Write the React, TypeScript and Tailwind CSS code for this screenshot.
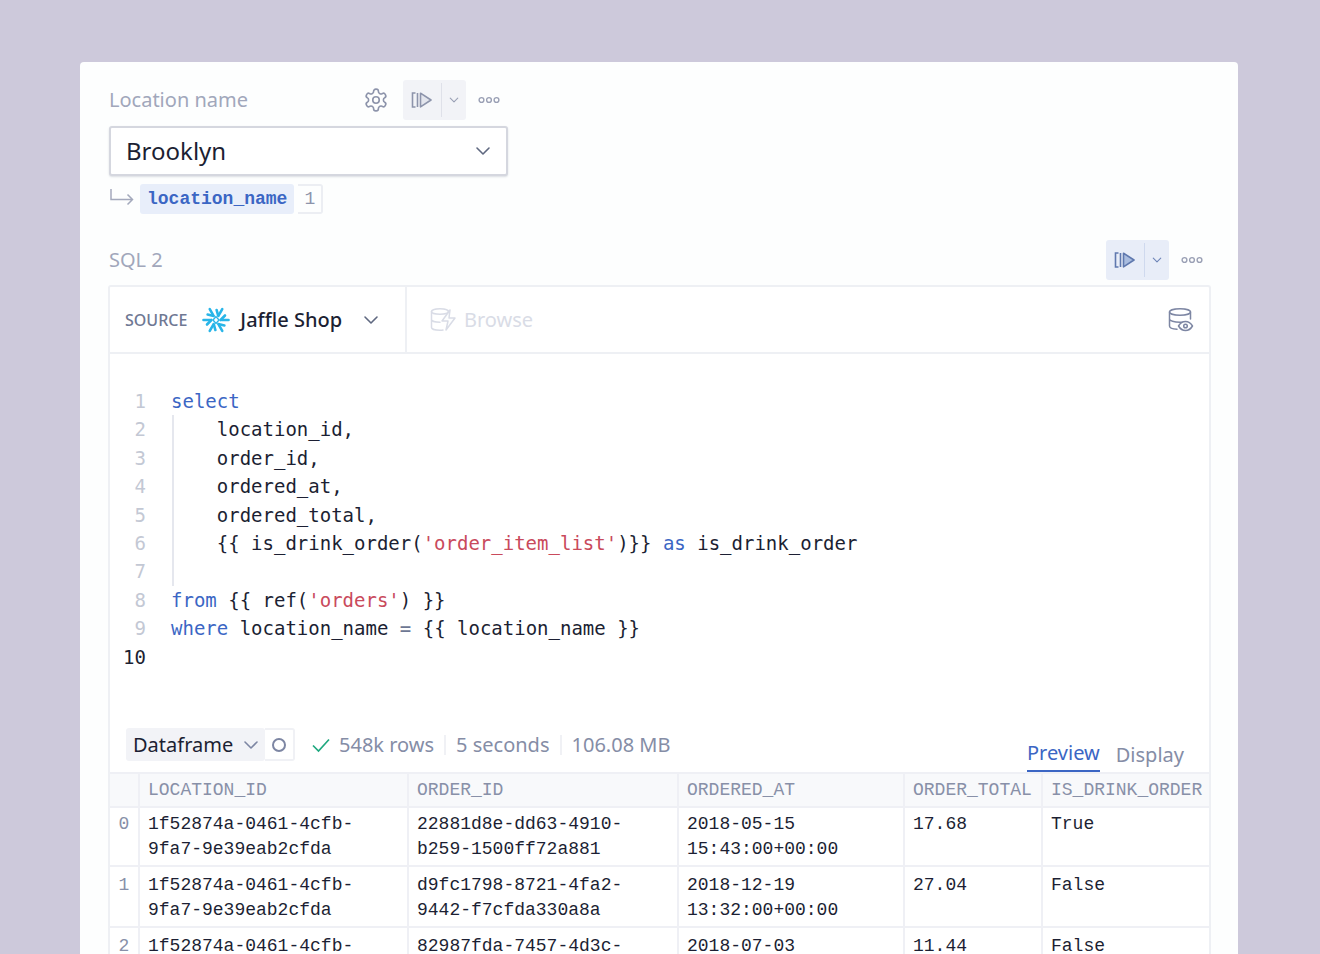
import React from "react";

const UI = "font-['Noto_Sans','Inter',sans-serif]";
const MONO = "font-['Liberation_Mono',monospace]";
const CODE = "font-['DejaVu_Sans_Mono',monospace]";

function Chevron({ className = "", w = 16, sw = 1.6 }: { className?: string; w?: number; sw?: number }) {
  return (
    <svg width={w} height={w} viewBox="0 0 16 16" fill="none" className={className}>
      <path d="M2 5l6 6 6-6" stroke="currentColor" strokeWidth={sw} strokeLinecap="round" strokeLinejoin="round" />
    </svg>
  );
}

function RunIcon({ color, fill }: { color: string; fill: string }) {
  return (
    <svg width="22" height="18" viewBox="0 0 22 18" fill="none">
      <path d="M4.5 2H1.5v14h3" stroke={color} strokeWidth="1.6" />
      <path d="M6.5 2v14" stroke={color} strokeWidth="1.6" />
      <path d="M9.5 2.2L20 9 9.5 15.8z" fill={fill} stroke={color} strokeWidth="1.6" strokeLinejoin="round" />
    </svg>
  );
}

function Dots({ color }: { color: string }) {
  return (
    <svg width="22" height="8" viewBox="0 0 22 8" fill="none" stroke={color} strokeWidth="1.4">
      <circle cx="3.5" cy="4" r="2.4" />
      <circle cx="11" cy="4" r="2.4" />
      <circle cx="18.5" cy="4" r="2.4" />
    </svg>
  );
}

function Gear() {
  return (
    <svg width="26" height="26" viewBox="0 0 24 24" fill="none" stroke="#8d94ab" strokeWidth="1.5" strokeLinecap="round" strokeLinejoin="round">
      <path d="M12.22 2h-.44a2 2 0 0 0-2 2v.18a2 2 0 0 1-1 1.73l-.43.25a2 2 0 0 1-2 0l-.15-.08a2 2 0 0 0-2.73.73l-.22.38a2 2 0 0 0 .73 2.73l.15.1a2 2 0 0 1 1 1.72v.51a2 2 0 0 1-1 1.74l-.15.09a2 2 0 0 0-.73 2.73l.22.38a2 2 0 0 0 2.73.73l.15-.08a2 2 0 0 1 2 0l.43.25a2 2 0 0 1 1 1.73V20a2 2 0 0 0 2 2h.44a2 2 0 0 0 2-2v-.18a2 2 0 0 1 1-1.73l.43-.25a2 2 0 0 1 2 0l.15.08a2 2 0 0 0 2.73-.73l.22-.39a2 2 0 0 0-.73-2.73l-.15-.08a2 2 0 0 1-1-1.74v-.5a2 2 0 0 1 1-1.74l.15-.09a2 2 0 0 0 .73-2.73l-.22-.38a2 2 0 0 0-2.73-.73l-.15.08a2 2 0 0 1-2 0l-.43-.25a2 2 0 0 1-1-1.73V4a2 2 0 0 0-2-2z" />
      <circle cx="12" cy="12" r="3" />
    </svg>
  );
}

function Snowflake() {
  const arm = (
    <>
      <path d="M14 1.8v7" stroke="#29b5e8" strokeWidth="2.8" strokeLinecap="round" />
      <path d="M9.4 3.6L14 8.4l4.6-4.8" stroke="#29b5e8" strokeWidth="2.8" strokeLinecap="round" fill="none" />
    </>
  );
  return (
    <svg width="28" height="28" viewBox="0 0 28 28" fill="none">
      {[30, 90, 150, 210, 270, 330].map((a) => (
        <g key={a} transform={`rotate(${a} 14 14)`}>
          <path d="M14 1.5v6.6" stroke="#29b5e8" strokeWidth="2.6" strokeLinecap="round" />
          <path d="M9.5 5L14 9.4" stroke="#29b5e8" strokeWidth="2.6" strokeLinecap="round" />
        </g>
      ))}
      <path d="M14 10.6l3 3.4-3 3.4-3-3.4z" fill="none" stroke="#29b5e8" strokeWidth="1.4" />
      {false && arm}
    </svg>
  );
}

function BrowseIcon() {
  return (
    <svg width="28" height="26" viewBox="0 0 28 26" fill="none" stroke="#d9dce6" strokeWidth="1.5" strokeLinecap="round" strokeLinejoin="round">
      <ellipse cx="10" cy="4.5" rx="8.5" ry="2.8" />
      <path d="M1.5 4.5v16c0 1.5 3.8 2.8 8.5 2.8 1 0 2 0 3-.2M1.5 12.5c0 1.5 3.8 2.8 8.5 2.8M18.5 4.5v3" />
      <path d="M20 3L12 14h6l-2 9 9-12h-6l1-8z" fill="#fdfefe" />
    </svg>
  );
}

function DbEye() {
  return (
    <svg width="26" height="26" viewBox="0 0 26 26" fill="none" stroke="#7d86a3" strokeWidth="1.5" strokeLinecap="round" strokeLinejoin="round">
      <ellipse cx="12" cy="5" rx="10.5" ry="3.2" />
      <path d="M1.5 5v14c0 1.6 3.2 3 7.5 3.2M1.5 12c0 1.7 4.5 3.2 10.5 3.2 1.5 0 3-.1 4.3-.3M22.5 5v7" />
      <path d="M10.5 19c1.8-3 4.2-4.5 7-4.5s5.2 1.500 7 4.500c-1.800 3-4.200 4.500-7 4.500s-5.200-1.500-7-4.500z" fill="#fdfefe" />
      <circle cx="17.500" cy="19" r="1.800" />
    </svg>
  );
}

const B = ({ children }: { children: React.ReactNode }) => <span className="text-[#3b66c4]">{children}</span>;
const R = ({ children }: { children: React.ReactNode }) => <span className="text-[#c94a5c]">{children}</span>;

const code: React.ReactNode[] = [
  <B>select</B>,
  <>{"    "}location_id,</>,
  <>{"    "}order_id,</>,
  <>{"    "}ordered_at,</>,
  <>{"    "}ordered_total,</>,
  <>{"    {{ is_drink_order("}<R>'order_item_list'</R>{")}} "}<B>as</B>{" is_drink_order"}</>,
  <></>,
  <><B>from</B>{" {{ ref("}<R>'orders'</R>{") }}"}</>,
  <><B>where</B>{" location_name "}<span className="text-[#6d7794]">=</span>{" {{ location_name }}"}</>,
  <></>,
];

const cols = "grid grid-cols-[28px_269px_270px_226px_138px_1fr]";
const cellB = "border-l-2 border-[#eff0f5] pl-[8px]";

const rows = [
  { i: "0", h: "h-[59px]", pt: "pt-[4px]", c: ["1f52874a-0461-4cfb-\n9fa7-9e39eab2cfda", "22881d8e-dd63-4910-\nb259-1500ff72a881", "2018-05-15\n15:43:00+00:00", "17.68", "True"] },
  { i: "1", h: "h-[61px]", pt: "pt-[6px]", c: ["1f52874a-0461-4cfb-\n9fa7-9e39eab2cfda", "d9fc1798-8721-4fa2-\n9442-f7cfda330a8a", "2018-12-19\n13:32:00+00:00", "27.04", "False"] },
  { i: "2", h: "h-[61px]", pt: "pt-[6px]", c: ["1f52874a-0461-4cfb-", "82987fda-7457-4d3c-", "2018-07-03", "11.44", "False"] },
];

export default function App() {
  return (
    <div className={`h-[954px] overflow-hidden bg-[#cdc9db] pl-[80px] pt-[62px] ${UI}`}>
      <div className="h-[892px] w-[1158px] overflow-hidden rounded-t-[4px] bg-[#fdfefe] pl-[28px] pr-[27px] pt-[18px]">
        {/* Input cell header */}
        <div className="flex h-[40px] w-[400px] items-center">
          <span className="ml-[1px] text-[20px] text-[#a1a7bb]">Location name</span>
          <span className="ml-auto flex items-center">
            <Gear />
            <span className="ml-[14px] flex h-[40px] w-[63px] items-center rounded-[3px] bg-[#f2f3f7]">
              <span className="flex w-[38px] justify-center"><RunIcon color="#8d94ab" fill="#e3e5ed" /></span>
              <span className="h-[34px] w-px bg-[#dfe1e9]" />
              <span className="flex flex-1 justify-center text-[#9aa0b5]"><Chevron w={10} sw={1.8} /></span>
            </span>
            <span className="ml-[12px] mr-[8px]"><Dots color="#9aa0b5" /></span>
          </span>
        </div>
        {/* Select */}
        <div className="mt-[6px] ml-[1px] flex h-[50px] w-[399px] items-center justify-between rounded-[3px] border-2 border-[#d5d7df] bg-white pl-[15px] pr-[15px] shadow-[0_1px_2px_rgba(60,70,100,0.18)]">
          <span className="text-[24px] text-[#1c1f33]">Brooklyn</span>
          <Chevron className="text-[#5f6880]" />
        </div>
        {/* Variable row */}
        <div className="mt-[8px] ml-[1px] flex h-[30px] items-center">
          <svg width="26" height="18" viewBox="0 0 26 18" fill="none" stroke="#a4a9bc" strokeWidth="1.5" className="mb-[4px] mr-[5px]">
            <path d="M2 1v10.500h21M18.500 6.500l5 5-5 5" />
          </svg>
          <span className={`flex h-[30px] items-center rounded-[3px] bg-[#e8eefa] px-[7px] text-[18px] font-bold text-[#3b66c4] ${MONO}`}>location_name</span>
          <span className={`ml-[4px] flex h-[30px] w-[25px] items-center justify-center rounded-r-[3px] border-2 border-l-0 border-[#eceef3] text-[18px] text-[#8d94ab] ${MONO}`}>1</span>
        </div>
        {/* SQL header */}
        <div className="mt-[26px] flex h-[40px] items-center">
          <span className="ml-[1px] text-[20px] text-[#a1a7bb]">SQL 2</span>
          <span className="ml-auto flex items-center">
            <span className="flex h-[40px] w-[63px] items-center rounded-[3px] bg-[#e8edf8]">
              <span className="flex w-[38px] justify-center"><RunIcon color="#5f78ae" fill="#a9bcdf" /></span>
              <span className="h-[34px] w-px bg-[#cfd9ee]" />
              <span className="flex flex-1 justify-center text-[#6f86b8]"><Chevron w={10} sw={1.8} /></span>
            </span>
            <span className="ml-[12px] mr-[8px]"><Dots color="#9aa0b5" /></span>
          </span>
        </div>
        {/* Panel */}
        <div className="mt-[5px] h-[700px] w-[1103px] rounded-t-[3px] border-2 border-b-0 border-[#eef0f4] bg-white">
          <div className="flex h-[67px] items-center border-b-2 border-[#eef0f4]">
            <div className="flex h-full w-[297px] items-center border-r-2 border-[#eef0f4] pl-[15px]">
              <span className="text-[16px] font-medium text-[#6f7893]">SOURCE</span>
              <span className="ml-[15px]"><Snowflake /></span>
              <span className="ml-[10px] text-[20px] font-medium text-[#1c1f33]">Jaffle Shop</span>
              <Chevron className="ml-[21px] text-[#5f6880]" />
            </div>
            <span className="ml-[23px]"><BrowseIcon /></span>
            <span className="ml-[6px] text-[20px] text-[#d9dce6]">Browse</span>
            <span className="ml-auto mr-[15px]"><DbEye /></span>
          </div>
          {/* Code */}
          <div className={`relative flex h-[374px] pt-[33px] text-[19px] leading-[28.4px] ${CODE}`}>
            <div className="w-[36px] text-right text-[#c3c8d4]">
              {code.map((_, i) => (
                <div key={i} className={i === 9 ? "text-[#1c1f33]" : ""}>{i + 1}</div>
              ))}
            </div>
            <div className="ml-[25px] whitespace-pre text-[#1c1f33]">
              {code.map((l, i) => (
                <div key={i} className="h-[28.4px]">{l}</div>
              ))}
            </div>
            <div className="absolute left-[62px] top-[61px] h-[171px] w-[2px] bg-[#e5e7ee]" />
          </div>
          {/* Result bar */}
          <div className="flex h-[44px] items-start pl-[16px] pr-[25px]">
            <span className="flex h-[33px] w-[139px] items-center rounded-[3px] bg-[#f2f3f7] pl-[7px] text-[20px] text-[#1c1f33]">
              Dataframe
              <Chevron className="ml-[10px] text-[#7d86a3]" />
            </span>
            <span className="flex h-[33px] w-[30px] items-center justify-center rounded-r-[3px] border-2 border-l-0 border-[#f0f1f5]">
              <span className="h-[14px] w-[14px] rounded-full border-2 border-[#7d86a3]" />
            </span>
            <span className="flex h-[33px] items-center text-[20px] text-[#858da6]">
              <svg width="20" height="16" viewBox="0 0 20 16" fill="none" className="ml-[16px] mr-[8px]">
                <path d="M2 8.500l5.500 5.500L18 2.500" stroke="#1fa87f" strokeWidth="1.700" />
              </svg>
              548k rows
              <span className="mx-[10px] h-[20px] w-[2px] bg-[#f0f1f5]" />
              5 seconds
              <span className="mx-[10px] h-[20px] w-[2px] bg-[#f0f1f5]" />
              106.08 MB
            </span>
            <span className="ml-auto flex h-[44px] items-end gap-[16px] text-[20px]">
              <span className="flex h-[44px] items-end border-b-2 border-[#3b66c4] pb-[4px] leading-[27px] text-[#3b66c4]">Preview</span>
              <span className="flex h-[44px] items-end pb-[4px] leading-[27px] text-[#858da6]">Display</span>
            </span>
          </div>
          {/* Table */}
          <div className={`text-[18px] leading-[25px] ${MONO}`}>
            <div className={`${cols} h-[36px] items-stretch border-y-2 border-[#eff0f5] bg-[#f8f9fb] text-[#8890a8]`}>
              <div />
              {["LOCATION_ID", "ORDER_ID", "ORDERED_AT", "ORDER_TOTAL", "IS_DRINK_ORDER"].map((h) => (
                <div key={h} className={`${cellB} flex items-center`}>{h}</div>
              ))}
            </div>
            {rows.map((r) => (
              <div key={r.i} className={`${cols} ${r.h} border-b-2 border-[#eff0f5] text-[#1c1f33]`}>
                <div className={`${r.pt} text-center text-[#8890a8]`}>{r.i}</div>
                {r.c.map((t, j) => (
                  <div key={j} className={`${cellB} ${r.pt} whitespace-pre`}>{t}</div>
                ))}
              </div>
            ))}
          </div>
        </div>
      </div>
    </div>
  );
}
